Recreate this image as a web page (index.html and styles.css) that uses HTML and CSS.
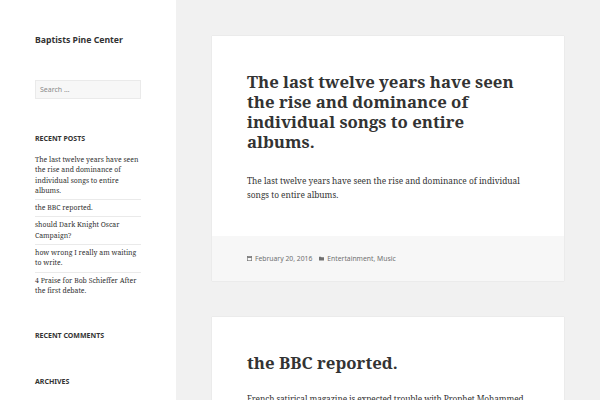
FILE: index.html
```html
<!DOCTYPE html>
<html lang="en">
<head>
<meta charset="utf-8">
<title>Baptists Pine Center</title>
<link rel="stylesheet" href="styles.css">
</head>
<body>
<div class="page">
  <aside class="sidebar">
    <p class="site-title">Baptists Pine Center</p>
    <div class="search"><span class="search-ph">Search …</span></div>
    <section class="widget">
      <h2 class="widget-title">Recent Posts</h2>
      <ul class="post-list">
        <li>The last twelve years have seen the rise and dominance of individual songs to entire albums.</li>
        <li>the BBC reported.</li>
        <li>should Dark Knight Oscar Campaign?</li>
        <li>how wrong I really am waiting to write.</li>
        <li>4 Praise for Bob Schieffer After the first debate.</li>
      </ul>
    </section>
    <section class="widget widget-comments">
      <h2 class="widget-title">Recent Comments</h2>
    </section>
    <section class="widget widget-archives">
      <h2 class="widget-title">Archives</h2>
    </section>
  </aside>
  <main class="content">
    <article class="card">
      <div class="card-body">
        <h1 class="entry-title">The last twelve years have seen the rise and dominance of individual songs to entire albums.</h1>
        <p class="entry-text">The last twelve years have seen the rise and dominance of individual songs to entire albums.</p>
      </div>
      <footer class="entry-footer">
        <span class="meta"><svg class="ico" viewBox="0 0 8 8" width="5" height="5"><rect x="0.5" y="1" width="7" height="6.5" fill="none" stroke="#707070" stroke-width="1"/><rect x="0.5" y="1" width="7" height="2" fill="#707070"/></svg>February 20, 2016</span>
        <span class="meta"><svg class="ico" viewBox="0 0 8 8" width="5" height="5"><path d="M0 1h3l1 1h4v5H0z" fill="#707070"/></svg>Entertainment, Music</span>
      </footer>
    </article>
    <article class="card">
      <div class="card-body">
        <h1 class="entry-title">the BBC reported.</h1>
        <p class="entry-text entry-text-tight">French satirical magazine is expected trouble with Prophet Mohammed cartoons.</p>
      </div>
    </article>
  </main>
</div>
</body>
</html>
```
FILE: styles.css
```css
html, body {
  margin: 0;
  padding: 0;
  height: 100%;
  overflow: hidden;
}
body {
  background: #f1f1f1;
  color: #333333;
  font-family: "Noto Serif", "DejaVu Serif", serif;
}
.page {
  display: flex;
  min-height: 400px;
}
.sidebar {
  width: 176px;
  flex: none;
  background: #ffffff;
  padding: 34px 35px 0 35px;
  box-sizing: border-box;
}
.site-title {
  margin: 0;
  font-family: "Noto Sans", sans-serif;
  font-weight: 700;
  font-size: 8.7px;
  line-height: 13px;
  color: #333333;
}
.search {
  margin-top: 33px;
  height: 19px;
  background: #f7f7f7;
  border: 1px solid #eaeaea;
  box-sizing: border-box;
  display: flex;
  align-items: center;
  padding-left: 4px;
}
.search-ph {
  font-family: "Noto Sans", sans-serif;
  font-size: 7px;
  color: #8a8a8a;
}
.widget-title {
  margin: 0;
  font-family: "Noto Sans", sans-serif;
  font-weight: 700;
  font-size: 7px;
  line-height: 10px;
  text-transform: uppercase;
  color: #333333;
}
.widget {
  margin-top: 35px;
}
.post-list {
  list-style: none;
  margin: 11px 0 0 0;
  padding: 0;
}
.post-list li {
  font-size: 6.9px;
  line-height: 10.3px;
  padding: 3px 0;
  border-top: 1px solid #eaeaea;
  color: #333333;
}
.post-list li:first-child {
  border-top: 0;
  padding-top: 0;
}
.widget-comments {
  margin-top: 32px;
}
.widget-archives {
  margin-top: 36px;
}
.content {
  flex: 1;
  padding: 36px 36px 0 36px;
}
.card {
  background: #ffffff;
  box-shadow: 0 0 1px rgba(0,0,0,0.15);
  margin-bottom: 36px;
}
.card-body {
  padding: 36px 35px 34px 35px;
}
.entry-title {
  margin: 0;
  font-size: 16.8px;
  line-height: 20px;
  font-weight: 700;
  color: #333333;
}
.entry-text {
  margin: 22px 0 0 0;
  font-size: 8.3px;
  line-height: 14px;
  color: #333333;
}
.entry-text-tight {
  margin-top: 19px;
  letter-spacing: -0.1px;
}
.entry-footer {
  background: #f7f7f7;
  height: 45px;
  padding: 0 35px;
  display: flex;
  align-items: center;
  gap: 7px;
  font-family: "Noto Sans", sans-serif;
  font-size: 6.8px;
  color: #707070;
}
.meta {
  display: inline-flex;
  align-items: center;
  gap: 3px;
}
.ico {
  display: block;
}
```
